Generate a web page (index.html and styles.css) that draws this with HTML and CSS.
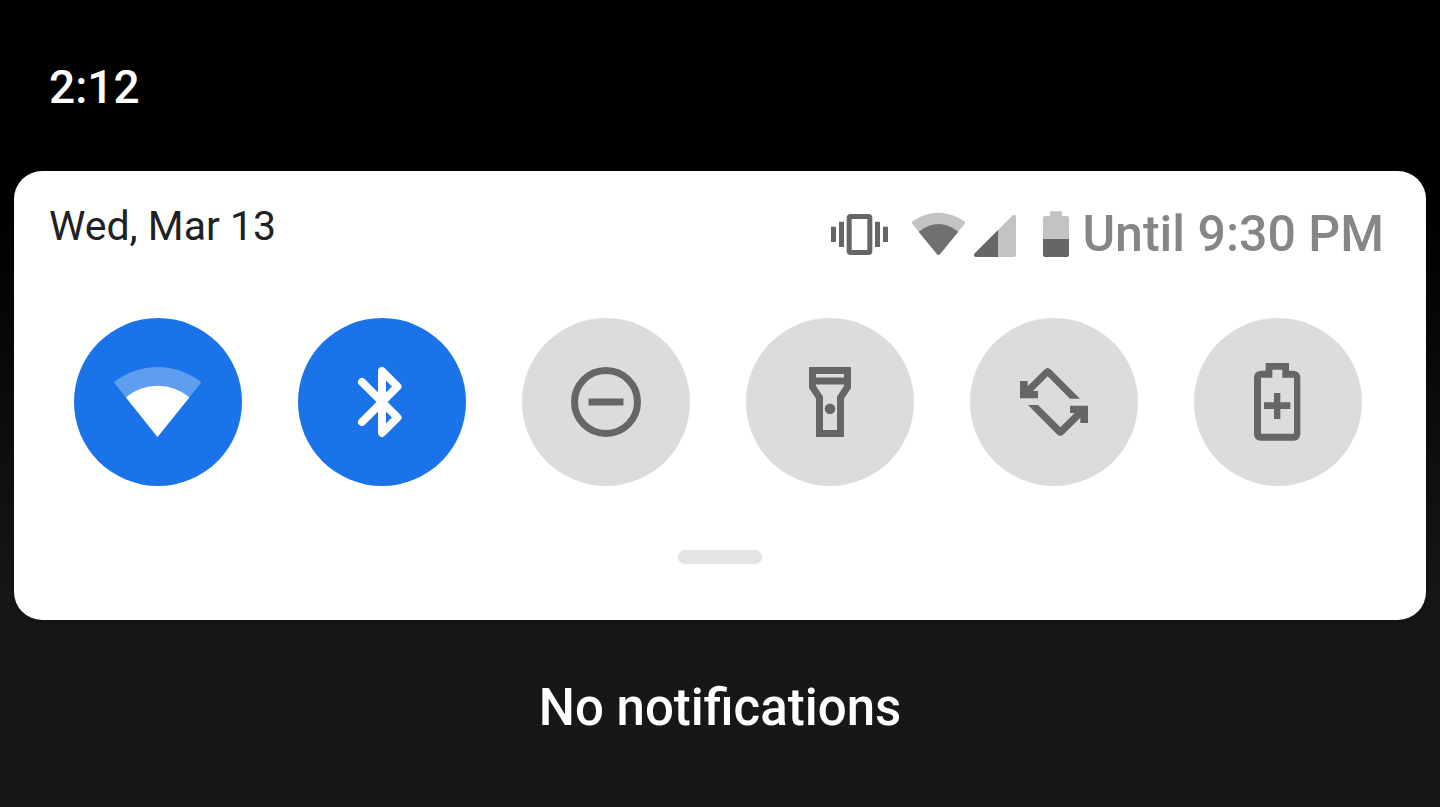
FILE: index.html
```html
<!DOCTYPE html>
<html lang="en">
<head>
<meta charset="utf-8">
<meta name="viewport" content="width=device-width, initial-scale=1">
<title>Notification shade</title>
<link rel="stylesheet" href="styles.css">
</head>
<body>
<main class="shade">
  <header class="status-bar"><time class="clock">2:12</time></header>

  <section class="panel" aria-label="Quick settings">
    <div class="panel-header">
      <time class="date">Wed, Mar 13</time>
      <div class="status">
        <svg class="status-vibrate" viewBox="33 33 171 141" aria-hidden="true">
          <path class="dark" fill-rule="evenodd" d="M92 42H145Q157 42 157 54V153Q157 165 145 165H92Q80 165 80 153V54Q80 42 92 42zM95 57V150H142V57z"/>
          <path class="dark" d="M33 80h15v46H33zM57 65h15v76H57zM165 65h15v76H165zM189 80h15v46H189z"/>
        </svg>
        <svg class="status-wifi" viewBox="276 33 159 141" aria-hidden="true">
          <path class="light" d="M278 73Q273 67 280 62Q355 15 431 62Q438 67 433 73L361 161Q355 168 350 161z"/>
          <path class="mid" d="M296 95Q355 49 415 95L361 161Q355 168 350 161z"/>
        </svg>
        <svg class="status-signal" viewBox="462 33 126 141" aria-hidden="true">
          <path class="light" d="M534 90L577 47Q588 40 588 51V165Q588 171 582 171H534z"/>
          <path class="dark" d="M534 90V171H467Q458 168 465 159z"/>
        </svg>
        <svg class="status-battery" viewBox="669 33 78 141" aria-hidden="true">
          <path class="light" d="M690 34H726V48H741Q747 48 747 54V117H669V54Q669 48 675 48H690z"/>
          <path class="dark" d="M669 117H747V165Q747 171 741 171H675Q669 171 669 165z"/>
        </svg>
        <span class="until">Until 9:30 PM</span>
      </div>
    </div>

    <div class="tiles">
      <button class="tile on" type="button" aria-label="Wi-Fi" aria-pressed="true">
        <svg viewBox="0 0 168 168" aria-hidden="true">
          <path fill-opacity=".3" d="M39.7 64.3A71 71 0 0 1 127.5 64.3L83.5 119z"/>
          <path d="M51.8 79.3A50 50 0 0 1 115.5 79.3L83.5 119z"/>
        </svg>
      </button>
      <button class="tile on" type="button" aria-label="Bluetooth" aria-pressed="true">
        <svg viewBox="0 0 168 168" aria-hidden="true">
          <path class="line bold" d="M64 64L99.500 99.500L84 115V53L99.500 68.500L64 104"/>
        </svg>
      </button>
      <button class="tile" type="button" aria-label="Do not disturb" aria-pressed="false">
        <svg viewBox="0 0 168 168" aria-hidden="true">
          <circle class="line" cx="84" cy="84" r="31.5"/>
          <path d="M66.5 80.5h35v7h-35z"/>
        </svg>
      </button>
      <button class="tile" type="button" aria-label="Flashlight" aria-pressed="false">
        <svg viewBox="0 0 168 168" aria-hidden="true">
          <path fill-rule="evenodd" d="M63 49H105V70L98 80.500V119H70V80.500L63 70zM70 56V59.500H98V56zM70 66.500V68L77 78.500V112H91V78.500L98 68V66.500z"/>
          <circle cx="84" cy="90.800" r="5.300"/>
        </svg>
      </button>
      <button class="tile" type="button" aria-label="Auto-rotate" aria-pressed="false">
        <svg viewBox="-120 -111 504 504" aria-hidden="true">
          <path d="M30 78H53V94L103 44Q113 34 123 44L210 131H180L113 64L69 108H84V130H30z"/>
          <path d="M54 150H84L151 217L194 174H180V152H234V204H211V188L161 238Q151 247 141 238z"/>
        </svg>
      </button>
      <button class="tile" type="button" aria-label="Battery saver" aria-pressed="false">
        <svg viewBox="-138 -111 504 504" aria-hidden="true">
          <path fill-rule="evenodd" d="M77 24H147V47H160Q181 49 181 68V238Q179 257 162 257H61Q44 257 42 238V68Q42 49 63 47H77zM97 44V68H63V236H162V68H127V44z"/>
          <path d="M102 114h19v28h30v20h-30v30h-19v-30H72v-20h30z"/>
        </svg>
      </button>
    </div>

    <div class="handle"></div>
  </section>

  <p class="empty">No notifications</p>
</main>
</body>
</html>
```
FILE: styles.css
```css
* {
  box-sizing: border-box;
}

body {
  margin: 0;
  font-family: Roboto, Inter, sans-serif;
}

.shade {
  min-height: 100vh;
  background: linear-gradient(#000 200px, #171717 600px);
}

.status-bar {
  padding: 59px 49px 56px;
  color: #fff;
}

.clock {
  display: block;
  font-size: 46px;
  font-weight: 500;
  line-height: 56px;
}

.panel {
  margin: 0 14px;
  padding: 36px 0 56px;
  background: #fff;
  border-radius: 28px;
  box-shadow: 0 2px 12px rgba(0, 0, 0, 0.3);
}

.panel-header {
  display: flex;
  align-items: flex-start;
  justify-content: space-between;
  padding: 0 42px 0 35px;
}

.date {
  color: #202124;
  font-size: 41px;
  line-height: 38px;
}

.status {
  display: flex;
  align-items: center;
  padding-top: 4px;
}

.status svg {
  height: 47px;
  flex: none;
}

.status-vibrate {
  width: 57px;
  margin-right: 24px;
}

.status-wifi {
  width: 53px;
  margin-right: 9px;
}

.status-signal {
  width: 42px;
  margin-right: 27px;
}

.status-battery {
  width: 26px;
  margin-right: 13px;
}

.dark {
  fill: #666;
}

.mid {
  fill: #707070;
}

.light {
  fill: #c3c3c3;
}

.until {
  color: #868686;
  font-size: 50px;
  font-weight: 500;
  line-height: 47px;
  white-space: nowrap;
}

.tiles {
  display: flex;
  justify-content: space-between;
  padding: 60px 64px 64px 60px;
}

.tile {
  width: 168px;
  height: 168px;
  padding: 0;
  border: 0;
  border-radius: 50%;
  background: #dcdcdc;
  color: #666;
  cursor: pointer;
}

.tile.on {
  background: #1a73e8;
  color: #fff;
}

.tile svg {
  display: block;
  width: 100%;
  height: 100%;
  fill: currentColor;
}

.tile .line {
  fill: none;
  stroke: currentColor;
  stroke-width: 7;
  stroke-linecap: round;
  stroke-linejoin: round;
}

.tile .bold {
  stroke-width: 8;
}

.handle {
  width: 84px;
  height: 14px;
  margin: 0 auto;
  border-radius: 7px;
  background: #e4e4e4;
}

.empty {
  margin: 0;
  padding: 60px 24px;
  color: #fff;
  font-size: 51px;
  font-weight: 500;
  line-height: 56px;
  text-align: center;
}
```
